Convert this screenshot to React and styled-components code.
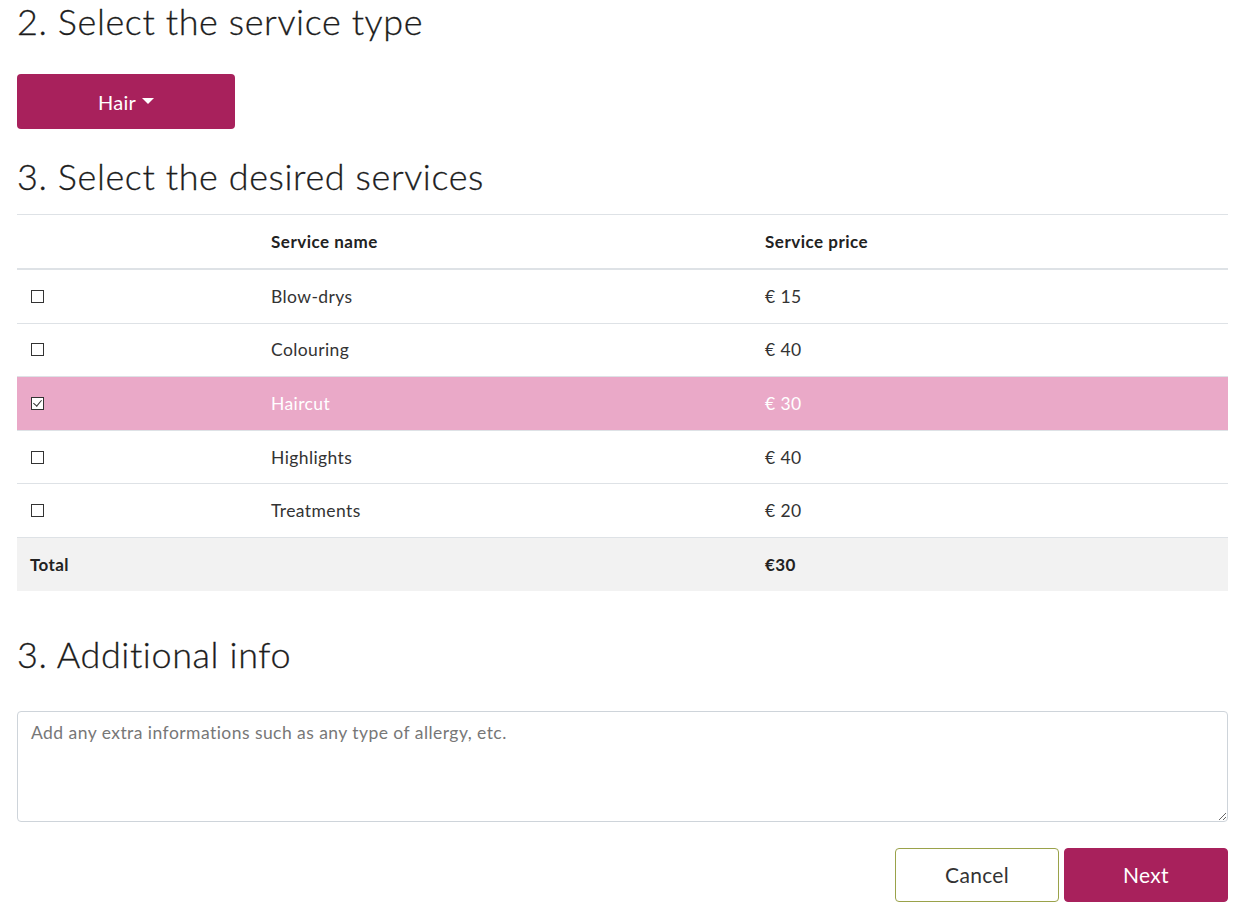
import React, { useState } from 'react';
import styled, { createGlobalStyle } from 'styled-components';

const services = [
    { name: 'Blow-drys', price: 15 },
    { name: 'Colouring', price: 40 },
    { name: 'Haircut', price: 30 },
    { name: 'Highlights', price: 40 },
    { name: 'Treatments', price: 20 },
];

const App = () => {
    const [selected, setSelected] = useState(['Haircut']);

    const toggle = name => {
        setSelected(prev => prev.includes(name) ? prev.filter(n => n !== name) : [...prev, name]);
    };

    const total = services
        .filter(s => selected.includes(s.name))
        .reduce((sum, s) => sum + s.price, 0);

    return (
        <Page>
            <GlobalStyle />
            <Heading>2. Select the service type</Heading>
            <DropdownButton>
                Hair <Caret />
            </DropdownButton>

            <Heading $top={26}>3. Select the desired services</Heading>
            <Table>
                <colgroup>
                    <col style={{ width: 241 }} />
                    <col style={{ width: 494 }} />
                    <col />
                </colgroup>
                <thead>
                    <tr>
                        <HeadCell></HeadCell>
                        <HeadCell>Service name</HeadCell>
                        <HeadCell>Service price</HeadCell>
                    </tr>
                </thead>
                <tbody>
                    {services.map(s => {
                        const active = selected.includes(s.name);
                        return (
                            <Row key={s.name} $active={active} onClick={() => toggle(s.name)}>
                                <Cell>
                                    <Check type="checkbox" checked={active} readOnly />
                                </Cell>
                                <Cell>{s.name}</Cell>
                                <Cell>€ {s.price}</Cell>
                            </Row>
                        );
                    })}
                </tbody>
                <tfoot>
                    <TotalRow>
                        <TotalCell>Total</TotalCell>
                        <TotalCell></TotalCell>
                        <TotalCell>€{total}</TotalCell>
                    </TotalRow>
                </tfoot>
            </Table>

            <Heading $top={42}>3. Additional info</Heading>
            <Notes placeholder="Add any extra informations such as any type of allergy, etc." />

            <Actions>
                <OutlineButton>Cancel</OutlineButton>
                <PrimaryButton>Next</PrimaryButton>
            </Actions>
        </Page>
    );
};

const GlobalStyle = createGlobalStyle`
    body {
        margin: 0;
        background: #fff;
        font-family: Lato, "Open Sans", sans-serif;
        color: #212529;
    }
`;

const Page = styled.div`
    padding: 0 20px 20px 17px;
`;

const Heading = styled.h2`
    margin: ${p => p.$top || 0}px 0 0;
    font-size: 36px;
    font-weight: 300;
    letter-spacing: 0.6px;
    line-height: 42px;
    color: #1c1c1c;
    -webkit-text-stroke: 0.3px #1c1c1c;
`;

const DropdownButton = styled.button`
    margin-top: 32px;
    width: 218px;
    height: 55px;
    display: flex;
    align-items: center;
    justify-content: center;
    gap: 6px;
    border: none;
    border-radius: 4px;
    background: #a8215c;
    color: #fff;
    font-family: inherit;
    font-size: 20px;
    letter-spacing: 0.3px;
`;

const Caret = styled.span`
    display: inline-block;
    width: 0;
    height: 0;
    border-left: 6px solid transparent;
    border-right: 6px solid transparent;
    border-top: 6px solid #fff;
    margin-top: -2px;
`;

const Table = styled.table`
    margin-top: 17px;
    width: 100%;
    table-layout: fixed;
    border-collapse: collapse;
    font-size: 17.5px;
    letter-spacing: 0.4px;
    color: #333;
`;

const HeadCell = styled.th`
    height: 53px;
    padding: 0 12px 0 13px;
    text-align: left;
    font-size: 17px;
    font-weight: 700;
    letter-spacing: 0.5px;
    color: #222;
    border-top: 1px solid #dee2e6;
    border-bottom: 2px solid #dee2e6;
`;

const Row = styled.tr`
    background: ${p => p.$active ? '#eaa9c8' : '#fff'};
    color: ${p => p.$active ? '#fff' : '#333'};
    cursor: pointer;
`;

const Cell = styled.td`
    height: 52.6px;
    padding: 0 12px 0 13px;
    border-bottom: 1px solid #dee2e6;
    vertical-align: middle;
`;

const Check = styled.input`
    appearance: none;
    margin: 0 0 0 1px;
    width: 13px;
    height: 13px;
    display: block;
    border: 1px solid #333;
    background: #fff;
    position: relative;
    &:checked::after {
        content: '';
        position: absolute;
        left: 3px;
        top: 0px;
        width: 4px;
        height: 7px;
        border-right: 1.5px solid #333;
        border-bottom: 1.5px solid #333;
        transform: rotate(40deg);
    }
`;

const TotalRow = styled.tr`
    background: #f2f2f2;
`;

const TotalCell = styled.td`
    height: 53px;
    padding: 0 12px 0 13px;
    font-size: 17px;
    font-weight: 700;
    color: #222;
`;

const Notes = styled.textarea`
    margin-top: 36px;
    display: block;
    box-sizing: border-box;
    width: 100%;
    height: 111px;
    padding: 10px 13px;
    border: 1px solid #ced4da;
    border-radius: 4px;
    font-family: inherit;
    font-size: 17.5px;
    letter-spacing: 0.45px;
    color: #333;
    &::placeholder {
        color: #777;
    }
`;

const Actions = styled.div`
    margin-top: 26px;
    display: flex;
    justify-content: flex-end;
    gap: 5px;
`;

const BaseButton = styled.button`
    width: 164px;
    height: 54px;
    border-radius: 4px;
    font-family: inherit;
    font-size: 21px;
    letter-spacing: 0.3px;
`;

const OutlineButton = styled(BaseButton)`
    background: #fff;
    border: 1px solid #9aa24a;
    color: #333;
`;

const PrimaryButton = styled(BaseButton)`
    background: #a8215c;
    border: 1px solid #a8215c;
    color: #fff;
`;

export default App;
